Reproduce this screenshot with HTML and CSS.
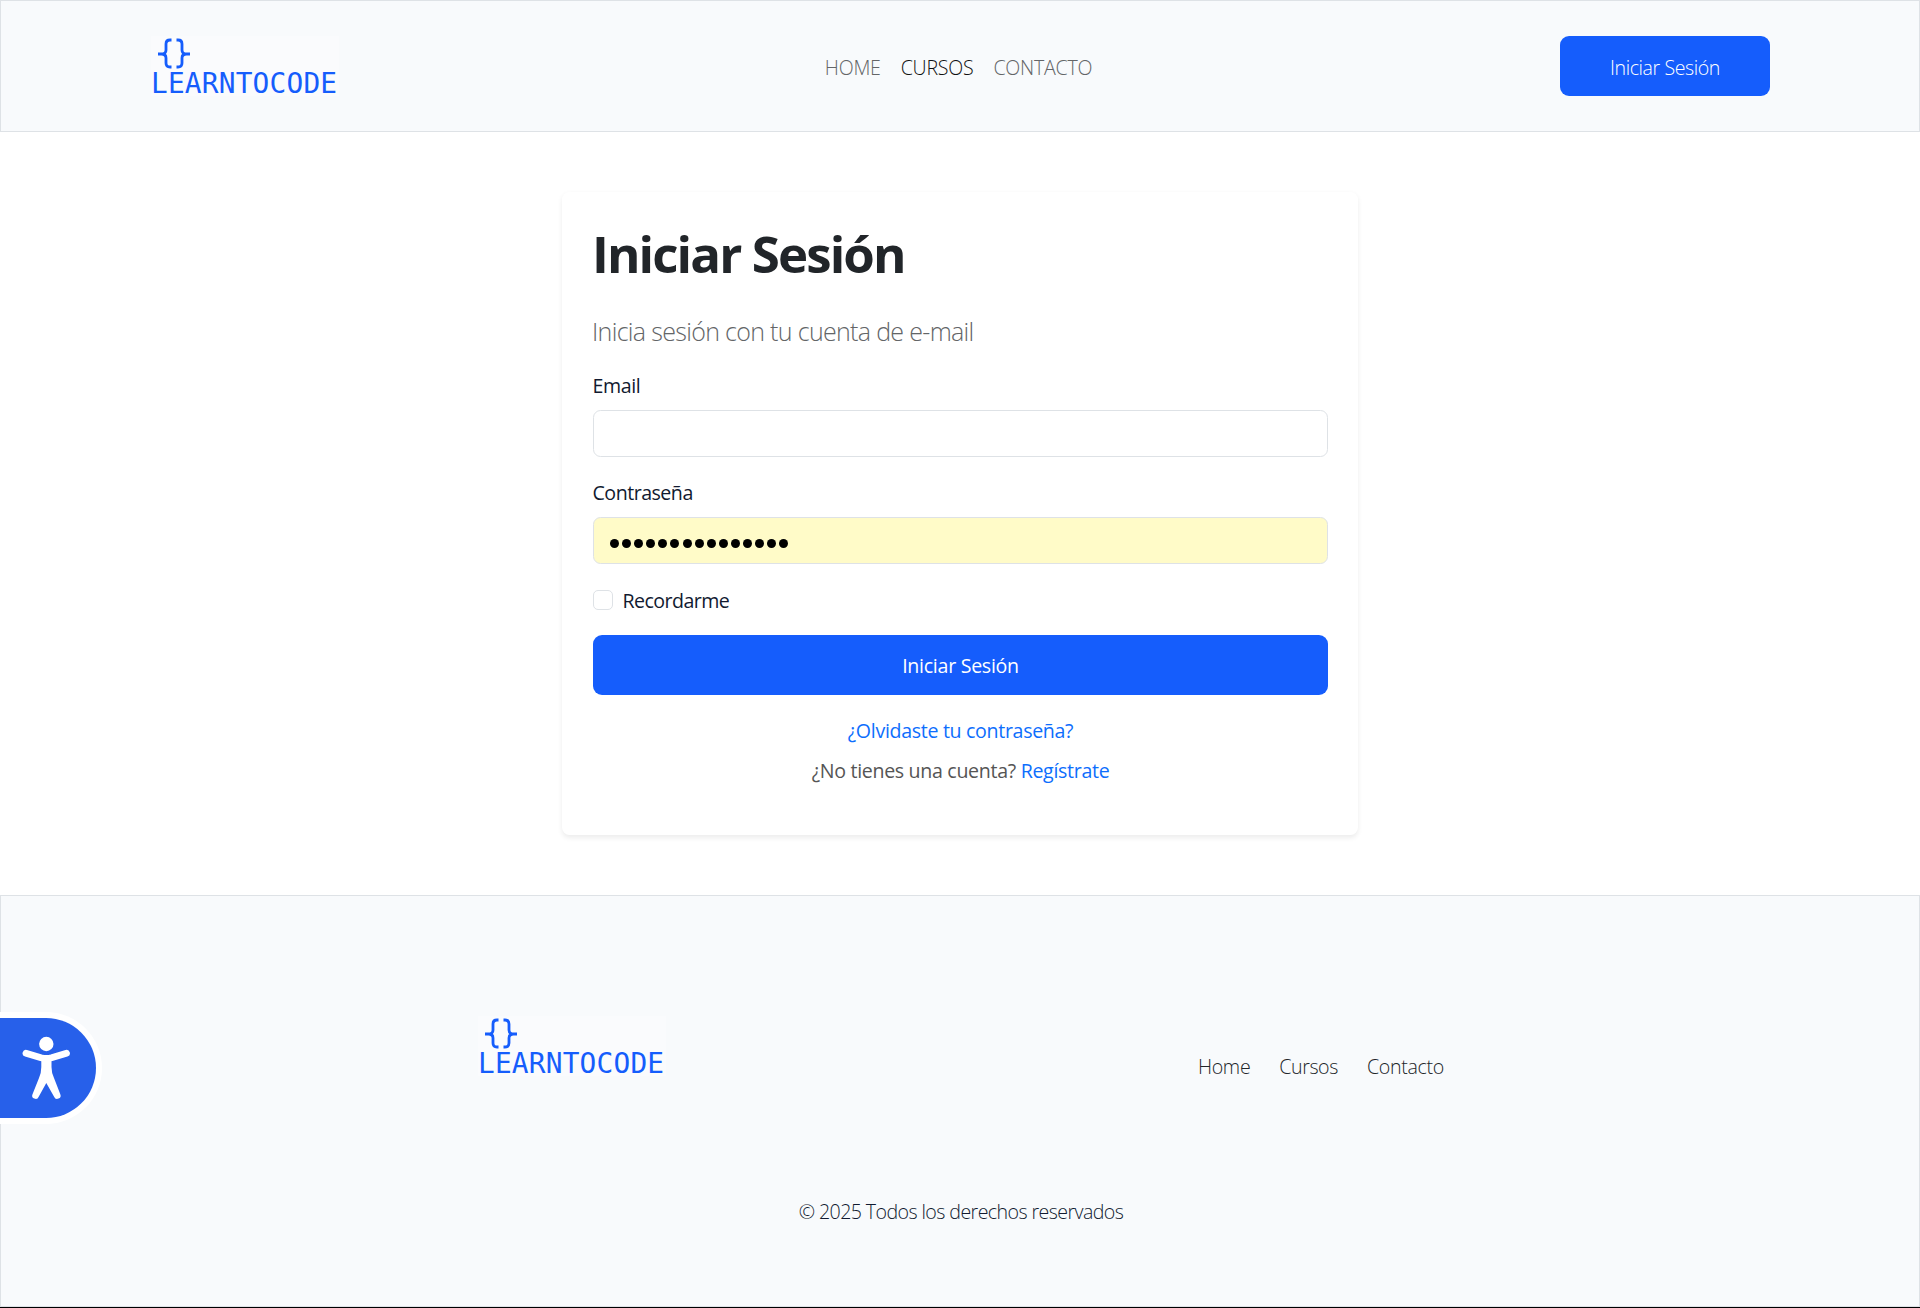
FILE: index.html
```html
<!DOCTYPE html>
<html lang="es">
<head>
<meta charset="utf-8">
<title>Iniciar Sesión</title>
<link rel="stylesheet" href="styles.css">
</head>
<body>
<header class="topbar">
  <a class="logo">
    <svg class="logo-mark" viewBox="0 0 36 32" width="36" height="32"><path d="M15.500 2h-1.500q-4 0-4 4v6q0 4-4.500 4h-3.500h3.500q4.500 0 4.500 4v5q0 4 4 4h1.500M20.500 2h1.500q4 0 4 4v6q0 4 4.500 4h3.500h-3.500q-4.500 0-4.500 4v5q0 4-4 4h-1.500"/></svg>
    <span class="logo-name">LEARNTOCODE</span>
  </a>
  <nav class="menu">
    <a>HOME</a><a class="active">CURSOS</a><a>CONTACTO</a>
  </nav>
  <a class="btn btn-top">Iniciar Sesión</a>
</header>
<main class="main">
  <form class="card">
    <h1>Iniciar Sesión</h1>
    <p class="lead">Inicia sesión con tu cuenta de e-mail</p>
    <div class="field"><label class="label-email">Email</label><div class="input"></div></div>
    <div class="field"><label>Contraseña</label>
      <div class="input filled"><i></i><i></i><i></i><i></i><i></i><i></i><i></i><i></i><i></i><i></i><i></i><i></i><i></i><i></i><i></i></div></div>
    <div class="remember"><span class="box"></span><label>Recordarme</label></div>
    <div class="btn btn-wide">Iniciar Sesión</div>
    <div class="links">
      <p><a>¿Olvidaste tu contraseña?</a></p>
      <p>¿No tienes una cuenta? <a>Regístrate</a></p>
    </div>
  </form>
</main>
<footer class="footer">
  <div class="footer-row">
    <a class="logo">
      <svg class="logo-mark" viewBox="0 0 36 32" width="36" height="32"><path d="M15.500 2h-1.500q-4 0-4 4v6q0 4-4.500 4h-3.500h3.500q4.500 0 4.500 4v5q0 4 4 4h1.500M20.500 2h1.500q4 0 4 4v6q0 4 4.500 4h3.500h-3.500q-4.500 0-4.500 4v5q0 4-4 4h-1.500"/></svg>
      <span class="logo-name">LEARNTOCODE</span>
    </a>
    <nav class="footer-menu"><a>Home</a><a class="narrow">Cursos</a><a>Contacto</a></nav>
  </div>
  <p class="copy">© 2025 Todos los derechos reservados</p>
</footer>
<div class="access">
  <svg viewBox="0 0 48 64" width="48" height="64"><circle cx="24.300" cy="8" r="7.200"/><path class="limb" d="M4 17.300L19 21.800Q24.300 23.200 29.500 21.800L44.500 17.300"/><path d="M19.300 22h10.200v9q0 6 2.500 11l6.300 16.200a3.300 3.300 0 0 1-6.200 2.600L24.300 47l-7.600 13.800a3.300 3.300 0 0 1-6.200-2.600L17 42q2.300-5 2.300-11z"/></svg>
</div>
</body>
</html>
```
FILE: styles.css
```css
* { box-sizing: border-box; }
body { margin: 0; background: #fff; border-bottom: 1px solid #000; color: #111a30; font: 400 19.6px/30px "Open Sans", "Noto Sans", sans-serif; }
h1, p { margin: 0; }

.topbar { height: 132px; border: 1px solid #dee2e6; background: #f8fafc; display: flex; align-items: center; justify-content: space-between; padding: 0 149px 0 150px; }
.logo { width: 188px; height: 60px; background: #fafbfd; display: flex; flex-direction: column; padding: 2px 0 0; }
.logo-mark { margin-left: 5px; fill: none; stroke: #155dfc; stroke-width: 2.8; }
.logo-name { margin-top: 2px; font: 27.8px/24px "DejaVu Sans Mono", monospace; letter-spacing: .2px; white-space: nowrap; color: #155dfc; }
.menu { display: flex; gap: 20px; font-weight: 300; letter-spacing: -.25px; color: #636567; padding-top: 4px; margin-left: 18px; }
.menu .active { color: #111; }

.btn { height: 60px; border-radius: 9px; background: #155dfc; color: #fff; display: flex; align-items: center; justify-content: center; }
.btn-top { width: 210px; padding-top: 3px; font-weight: 300; letter-spacing: -.42px; }
.btn-wide { padding-top: 2px; letter-spacing: -.28px; }

.main { padding: 60px 562px; }
.card { height: 643px; border-radius: 7.5px; padding: 28px 30px 0 31px; background: #fff; box-shadow: 0 2.5px 5px rgba(0, 0, 0, .075); }
h1 { margin-left: -1px; font-size: 51px; line-height: 66px; font-weight: 700; letter-spacing: -1.9px; color: #212529; }
.lead { font-size: 25px; line-height: 38px; font-weight: 300; letter-spacing: -.68px; color: #636567; margin: 26px 0 21px -1px; }
.field { margin-bottom: 20px; }
.field label { display: block; margin-bottom: 9px; margin-left: -.5px; letter-spacing: -.5px; }
.field .label-email { letter-spacing: -.4px; }
.input { height: 47px; border: 1px solid #dee2e6; border-radius: 7.5px; display: flex; align-items: center; padding: 5px 16px 0; gap: 3.1px; }
.field + .field { padding-top: 1px; }
.filled { background: #fffbc8; }
.filled i { width: 9px; height: 9px; border-radius: 50%; background: #000; }
.remember { display: flex; align-items: center; gap: 9.5px; height: 30px; margin: 21px 0 20px; letter-spacing: -.55px; }
.remember label { padding-top: 2px; }
.box { width: 20px; height: 20px; border: 1px solid #dee2e6; border-radius: 5px; }
.links { display: grid; gap: 10px; margin-top: 21px; text-align: center; letter-spacing: -.32px; color: #555; }
.links a { color: #0d6efd; }

.footer { height: 412px; border: 1px solid #dee2e6; background: #f8fafc; padding: 120px 475px 0 477px; }
.footer-row { display: flex; justify-content: space-between; }
.footer-menu { display: flex; gap: 29px; font-weight: 300; letter-spacing: -.3px; padding-top: 36px; color: #212529; }
.footer-menu .narrow { letter-spacing: -.43px; }
.copy { text-align: center; font-weight: 300; letter-spacing: -.58px; margin-top: 115px; }

.access { position: fixed; left: 0; top: 1018px; width: 96px; height: 100px; border-radius: 0 50px 50px 0; background: #2760ea; box-shadow: 0 0 0 6px #fff; padding: 18px 22px; }
.access svg { fill: #fff; }
.access .limb { fill: none; stroke: #fff; stroke-width: 6.8; stroke-linecap: round; }
```
